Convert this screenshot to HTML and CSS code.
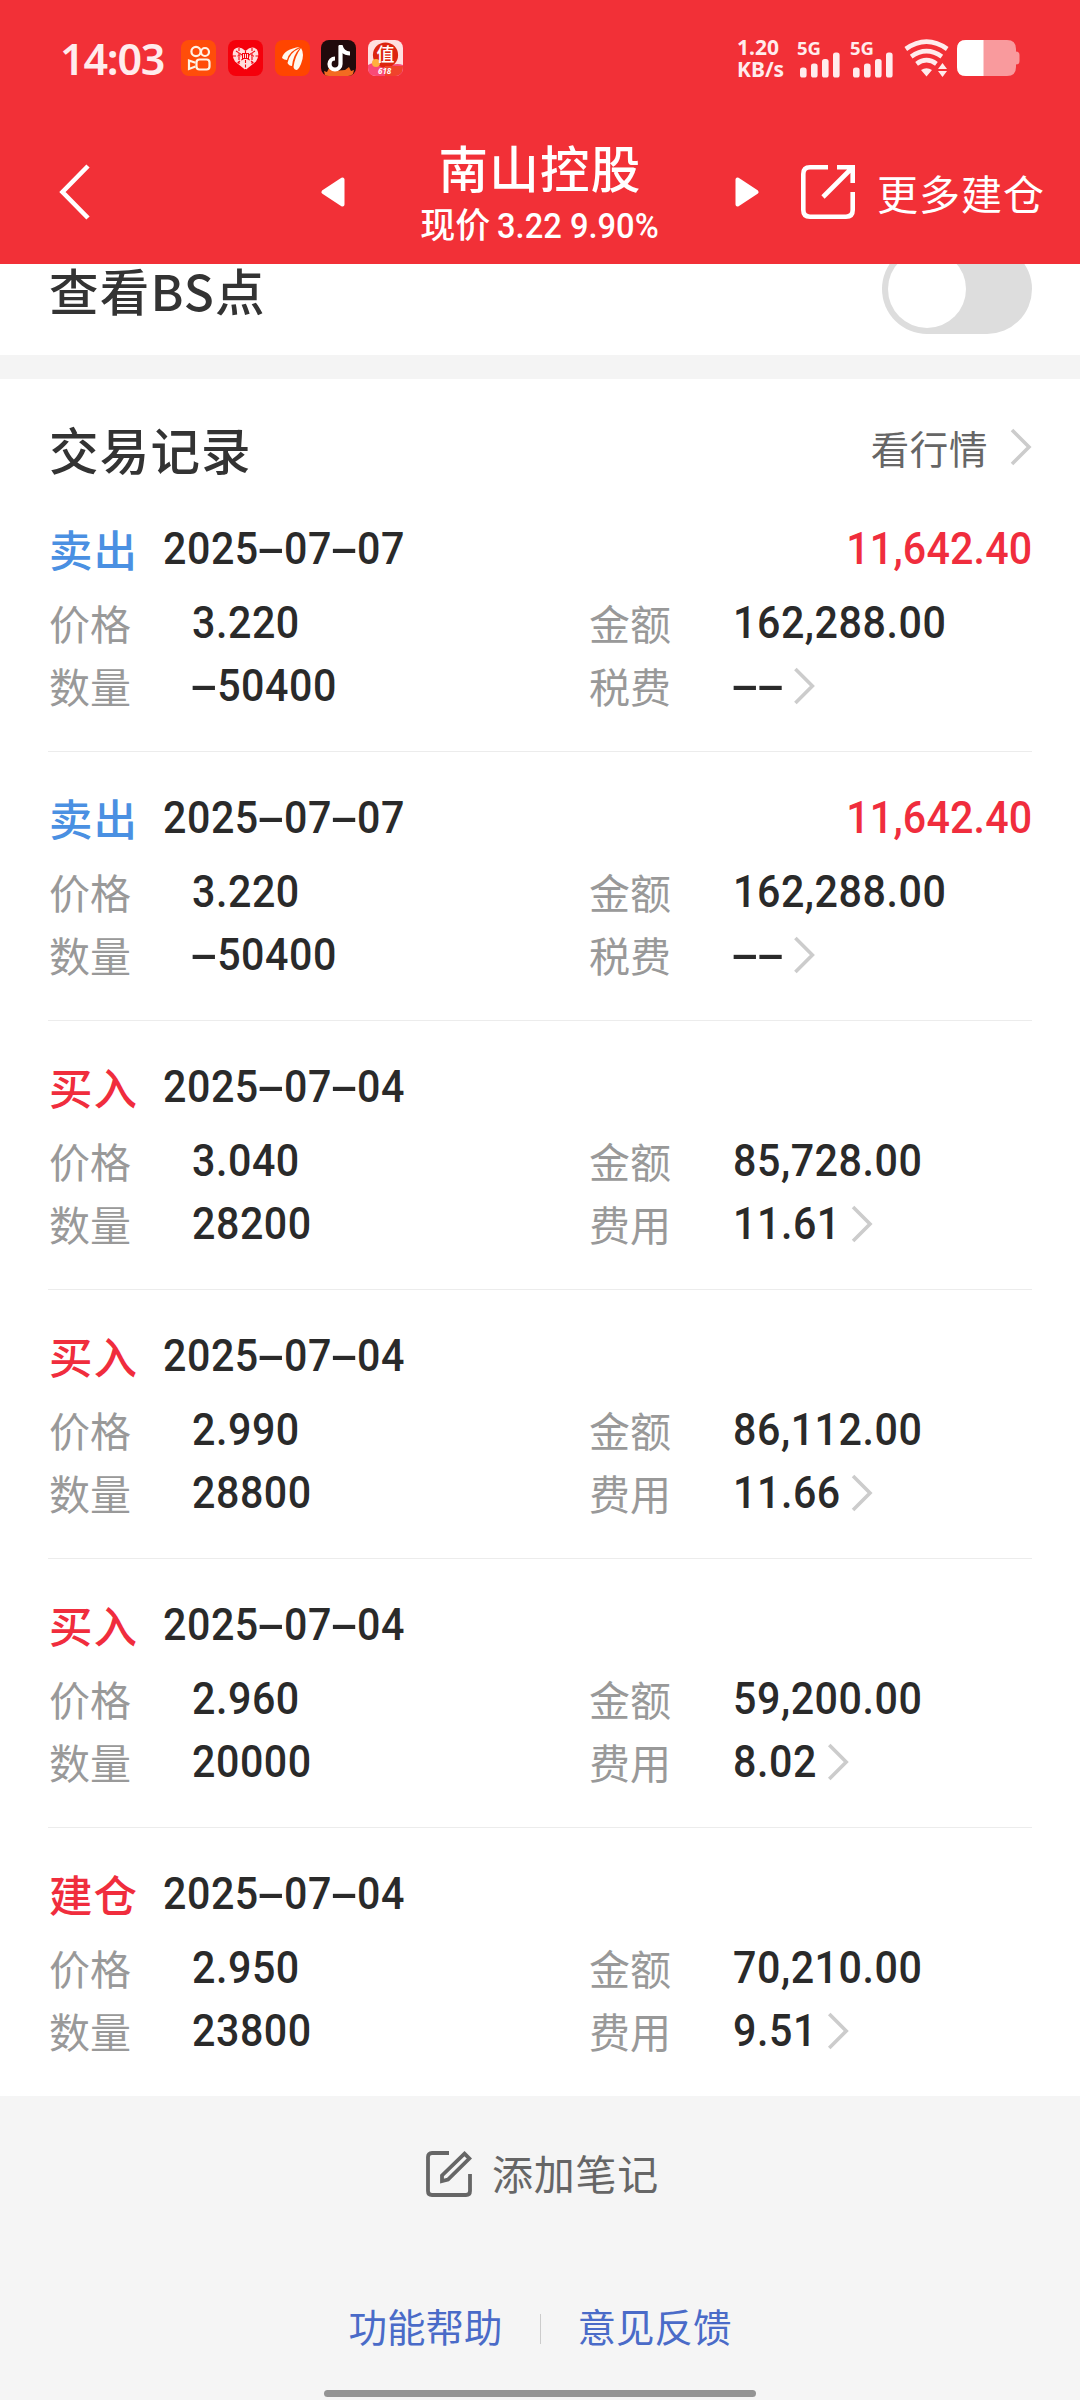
FILE: index.html
```html
<!DOCTYPE html>
<html lang="zh-CN">
<head>
  <meta charset="UTF-8">
  <title>南山控股 - 交易记录</title>
  <link rel="stylesheet" href="styles.css">
</head>
<body>

  <svg class="defs" width="0" height="0">
    <symbol id="chevron" viewBox="0 0 22 38" preserveAspectRatio="none"><path d="M2 2 L19 19 L2 36" fill="none" stroke="#ccc" stroke-width="3.6"/></symbol>
    <symbol id="signal" viewBox="0 0 40 26">
      <rect x="0" y="15.5" width="6.6" height="10" rx="2.6"/>
      <rect x="11" y="11.5" width="6.6" height="14" rx="2.6"/>
      <rect x="22" y="7" width="6.6" height="18.5" rx="2.6"/>
      <rect x="33" y="0.5" width="6.6" height="25" rx="2.6"/>
    </symbol>
  </svg>

  <header>
    <div class="status-bar">
      <span class="time">14:03</span>
      <div class="apps">
        <svg class="app" viewBox="0 0 35 36"><rect width="35" height="36" rx="8" fill="#ff4d0a"/>
          <g fill="none" stroke="#fff3e6" stroke-width="2.2"><circle cx="15" cy="11.5" r="4.6"/><circle cx="24" cy="12" r="4"/><rect x="15.5" y="19.5" width="13" height="10" rx="3"/><path d="M14.5 22.8 L8 20.5 V29 L14.5 26.5"/></g></svg>
        <svg class="app" viewBox="0 0 35 36"><rect width="35" height="36" rx="8" fill="#f5000b"/>
          <path d="M17.5 30 L7 21.5 Q3 15 6 9.5 Q11 5 17.5 11 Q24 5 29 9.5 Q32 15 28 21.5 Z" fill="#ffdcdc"/>
          <path d="M8 11 L26 23 M27 11 L9 23 M5 16 H30 M11 8 V24 M24 8 V24 M17.5 11 V30" stroke="#f5000b" stroke-width="1.1" stroke-dasharray="3 1.5" fill="none"/>
          <rect x="14" y="13" width="7" height="6" fill="#f5000b"/><path d="M15.5 14 V18 M17.5 14 V18 M19.5 14 V18" stroke="#ffdcdc"/></svg>
        <svg class="app" viewBox="0 0 35 36"><rect width="35" height="36" rx="8" fill="#ff4500"/>
          <g fill="#fff8ee"><path d="M7 18 Q9 9 25 7 Q14 11 12 20 Q9 20 7 18 Z"/><path d="M12.5 23 Q14 13 25 8 Q18 15 17 26 Q14 26 12.5 23 Z"/><path d="M18.5 27 Q20 16 26 8 Q30 14 26 24 Q24.5 28 22 30 Q19 30 18.5 27 Z"/></g></svg>
        <svg class="app" viewBox="0 0 35 36"><rect width="35" height="36" rx="8" fill="#210a0c"/>
          <path d="M4 35 L3 31 L6 32 L9 26 L12 31 L24 30 L28 27 L30 31 L33 30 L32 34 Q30 36 27 36 H8 Q5 36 4 35 Z" fill="#f36a21"/>
          <path d="M19.5 6 V24 A5.5 5.5 0 1 1 14 18.5" fill="none" stroke="#fff" stroke-width="4.2"/>
          <path d="M17.5 5 H21.5 Q23 11 29 11.5 V15.5 Q24 15.5 20.5 12.5 Z" fill="#fff"/></svg>
        <svg class="app" viewBox="0 0 35 36"><rect width="35" height="36" rx="8" fill="#ffdfe0"/>
          <path d="M0 25 Q8 20 17 28 Q27 22 35 25 V28 Q35 36 27 36 H8 Q0 36 0 28 Z" fill="#f94a76"/>
          <circle cx="17.5" cy="15" r="12.6" fill="#dd2410"/><circle cx="8" cy="23" r="4" fill="#ffb13d"/>
          <path d="M17 26 L35 26 L34 32 Q31 36 27 36 H17 Z" fill="#f0432c"/>
          <text class="zhi" x="8.5" y="21">值</text><text class="promo" x="10" y="34">618</text></svg>
      </div>
      <div class="status-icons">
        <div class="speed">1.20<br>KB/s</div>
        <div class="net"><span>5G</span><svg><use href="#signal"/></svg></div>
        <div class="net"><span>5G</span><svg><use href="#signal"/></svg></div>
        <svg class="wifi" viewBox="0 0 46 38">
          <g fill="none" stroke="#ffeced" stroke-width="4.6"><path d="M1.8 10 Q22.5 -4.6 43.2 10"/><path d="M7.2 17.6 Q22.5 6.8 37.8 17.6"/><path d="M12.6 24.8 Q22.5 17.6 32.4 24.8"/></g>
          <path d="M17 31 Q22.5 27.5 28 31 L22.5 37.5 Z M38.5 24 L43 30 H34 Z M34 32 H43 L38.5 38 Z" fill="#ffeced"/>
        </svg>
        <svg class="battery" viewBox="0 0 63 36">
          <path d="M9 0 H50 Q59 0 59 9 V11.5 Q62.5 11.5 62.5 15 V21 Q62.5 24.5 59 24.5 V27 Q59 36 50 36 H9 Q0 36 0 27 V9 Q0 0 9 0 Z" fill="#f99a9d"/>
          <path d="M26.5 0 H9 Q0 0 0 9 V27 Q0 36 9 36 H26.5 Z" fill="#fff"/>
        </svg>
      </div>
    </div>

    <nav class="nav">
      <svg class="back" viewBox="0 0 32 56"><path d="M29 2 L3.5 28 L29 54" fill="none" stroke="#fff" stroke-width="4.6"/></svg>
      <svg class="prev" viewBox="0 0 24 30"><path d="M2.5 15 L21.5 2.5 V27.5 Z"/></svg>
      <div class="stock">
        <h1>南山控股</h1>
        <p>现价 <span>3.22 9.90%</span></p>
      </div>
      <svg class="next" viewBox="0 0 24 30"><path d="M21.5 15 L2.5 2.5 V27.5 Z"/></svg>
      <div class="more">
        <svg viewBox="0 0 54 54"><path d="M27 2.3 H9 Q2.3 2.3 2.3 9 V45 Q2.3 51.7 9 51.7 H45 Q51.7 51.7 51.7 45 V27 M36 2.3 H51.7 V18 M51 3 L22 32" fill="none" stroke="#fff" stroke-width="4.6"/></svg>
        <span>更多建仓</span>
      </div>
    </nav>
  </header>

  <main>
    <section class="bs-row">
      <h2>查看BS点</h2>
      <div class="switch"><div class="knob"></div></div>
    </section>

    <section class="records">
      <div class="records-title">
        <h2>交易记录</h2>
        <a class="quote">看行情 <svg class="arrow"><use href="#chevron"/></svg></a>
      </div>

      <article class="record">
        <div class="record-head">
          <span class="type sell">卖出</span>
          <span class="date">2025<i>-</i>07<i>-</i>07</span>
          <span class="profit">11,642.40</span>
        </div>
        <dl>
          <dt>价格</dt><dd>3.220</dd>
          <dt>金额</dt><dd>162,288.00</dd>
          <dt>数量</dt><dd><i>-</i>50400</dd>
          <dt>税费</dt><dd><i>-</i><i>-</i><svg class="arrow"><use href="#chevron"/></svg></dd>
        </dl>
      </article>

      <article class="record">
        <div class="record-head">
          <span class="type sell">卖出</span>
          <span class="date">2025<i>-</i>07<i>-</i>07</span>
          <span class="profit">11,642.40</span>
        </div>
        <dl>
          <dt>价格</dt><dd>3.220</dd>
          <dt>金额</dt><dd>162,288.00</dd>
          <dt>数量</dt><dd><i>-</i>50400</dd>
          <dt>税费</dt><dd><i>-</i><i>-</i><svg class="arrow"><use href="#chevron"/></svg></dd>
        </dl>
      </article>

      <article class="record">
        <div class="record-head">
          <span class="type buy">买入</span>
          <span class="date">2025<i>-</i>07<i>-</i>04</span>
        </div>
        <dl>
          <dt>价格</dt><dd>3.040</dd>
          <dt>金额</dt><dd>85,728.00</dd>
          <dt>数量</dt><dd>28200</dd>
          <dt>费用</dt><dd>11.61<svg class="arrow"><use href="#chevron"/></svg></dd>
        </dl>
      </article>

      <article class="record">
        <div class="record-head">
          <span class="type buy">买入</span>
          <span class="date">2025<i>-</i>07<i>-</i>04</span>
        </div>
        <dl>
          <dt>价格</dt><dd>2.990</dd>
          <dt>金额</dt><dd>86,112.00</dd>
          <dt>数量</dt><dd>28800</dd>
          <dt>费用</dt><dd>11.66<svg class="arrow"><use href="#chevron"/></svg></dd>
        </dl>
      </article>

      <article class="record">
        <div class="record-head">
          <span class="type buy">买入</span>
          <span class="date">2025<i>-</i>07<i>-</i>04</span>
        </div>
        <dl>
          <dt>价格</dt><dd>2.960</dd>
          <dt>金额</dt><dd>59,200.00</dd>
          <dt>数量</dt><dd>20000</dd>
          <dt>费用</dt><dd>8.02<svg class="arrow"><use href="#chevron"/></svg></dd>
        </dl>
      </article>

      <article class="record">
        <div class="record-head">
          <span class="type buy">建仓</span>
          <span class="date">2025<i>-</i>07<i>-</i>04</span>
        </div>
        <dl>
          <dt>价格</dt><dd>2.950</dd>
          <dt>金额</dt><dd>70,210.00</dd>
          <dt>数量</dt><dd>23800</dd>
          <dt>费用</dt><dd>9.51<svg class="arrow"><use href="#chevron"/></svg></dd>
        </dl>
      </article>
    </section>
  </main>

  <footer>
    <div class="add-note">
      <svg viewBox="0 0 46 46"><g fill="none" stroke="#666" stroke-width="3.8"><path d="M23 2 H6 Q2 2 2 6 V40 Q2 44 6 44 H40 Q44 44 44 40 V23"/><path d="M38.5 2.7 L43.3 7.5 L22 28.5 L16 30 V24.5 Z"/></g></svg>
      <span>添加笔记</span>
    </div>
    <div class="links">
      <a>功能帮助</a>
      <a>意见反馈</a>
    </div>
    <div class="home-bar"></div>
  </footer>

</body>
</html>
```
FILE: styles.css
```css
* {
  margin: 0;
  padding: 0;
  box-sizing: border-box;
}

body {
  width: 1080px;
  height: 2400px;
  display: flex;
  flex-direction: column;
  overflow: hidden;
  background-color: #f5f5f5;
  color: #333;
  font-family: Roboto, "Noto Sans CJK SC", sans-serif;
}

h1, h2 {
  font-family: "Noto Sans CJK SC", sans-serif;
  font-size: 49.5px;
  font-weight: 500;
  line-height: 60px;
  letter-spacing: 1.2px;
}

svg { flex-shrink: 0; }
.defs { position: absolute; }
i { font-style: normal; }

/* Header */
header {
  position: relative;
  z-index: 1;
  height: 264px;
  background-color: #f23037;
  color: #fff;
}

.status-bar {
  height: 116px;
  padding: 0 60px;
  display: flex;
  align-items: center;
  color: #ffeced;
  font-family: "Noto Sans", sans-serif;
}

.time {
  width: 121px;
  font-size: 43px;
  font-weight: 600;
  letter-spacing: -1.2px;
}

.apps {
  display: flex;
  gap: 11.8px;
}

.app {
  width: 35px;
  height: 36px;
}

.zhi {
  font: 500 18px "Noto Sans CJK SC", sans-serif;
  fill: #fff;
}

.promo {
  font: italic 700 8px "Noto Sans", sans-serif;
  fill: #fff;
}

.status-icons {
  margin-left: auto;
  display: flex;
  align-items: center;
}

.speed {
  width: 61px;
  font-size: 21px;
  font-weight: 700;
  line-height: 22px;
}

.net {
  position: relative;
  width: 53px;
  height: 36px;
  padding-left: 2px;
}

.net span {
  position: absolute;
  left: -1px;
  top: -1px;
  font-size: 18.5px;
  font-weight: 700;
  line-height: 18px;
}

.net svg {
  display: block;
  width: 40px;
  height: 26px;
  margin-top: 11.5px;
  fill: #ffeced;
}

.wifi {
  width: 46px;
  height: 38px;
  margin-right: 7px;
}

.battery {
  width: 63px;
  height: 36px;
}

.nav {
  height: 148px;
  padding: 4px 35px 0 59px;
  display: flex;
  align-items: center;
}

.back {
  width: 32px;
  height: 56px;
}

.prev, .next {
  width: 24px;
  height: 30px;
  fill: #fff;
  stroke: #fff;
  stroke-width: 4;
  stroke-linejoin: round;
}

.prev { margin-left: 230px; }

.stock {
  width: 390px;
  padding-top: 4px;
  text-align: center;
}

.stock p {
  margin-top: 4px;
  font-size: 35px;
  font-weight: 500;
  line-height: 50px;
}

.stock span {
  display: inline-block;
  font-size: 35.5px;
  letter-spacing: 0;
  margin: 0 -6px 0 -9px;
  transform: scaleX(0.92);
}

.more {
  margin-left: auto;
  display: flex;
  align-items: center;
  gap: 22px;
  font-size: 41px;
  letter-spacing: 1px;
}

.more svg {
  width: 54px;
  height: 54px;
}

/* BS switch */
.bs-row {
  height: 115px;
  padding: 0 48px;
  display: flex;
  justify-content: space-between;
  background-color: #fff;
  border-bottom: 24px solid #f4f4f4;
}

.bs-row h2 { margin-top: -4px; }

.switch {
  width: 150px;
  height: 90px;
  margin-top: -20px;
  padding: 6px;
  border-radius: 45px;
  background-color: #ddd;
}

.knob {
  width: 78px;
  height: 78px;
  border-radius: 50%;
  background-color: #fff;
}

/* Records */
.records {
  padding: 0 48px;
  background-color: #fff;
}

.records h2, .bs-row h2 { padding-left: 1px; }

.records-title {
  height: 103px;
  padding-top: 40px;
  display: flex;
  justify-content: space-between;
}

.quote {
  display: flex;
  align-items: center;
  height: 56px;
  color: #666;
  font-size: 38.5px;
  letter-spacing: 0.6px;
}

.arrow {
  width: 22px;
  height: 38px;
}

.quote .arrow { margin-left: 22px; }

.record {
  height: 269px;
  padding-top: 34px;
}

.record + .record {
  padding-top: 33px;
  border-top: 1px solid #ececec;
}

.record-head {
  height: 64px;
  margin-bottom: 11px;
  display: flex;
  align-items: center;
}

.type {
  width: 115px;
  padding-left: 1px;
  font-size: 43.5px;
  font-weight: 500;
  letter-spacing: 1px;
}

.sell { color: #4a90e2; }
.buy { color: #f02d3d; }

/* slightly condensed figures */
.date, .profit, dd {
  font-size: 45px;
  font-weight: 500;
  letter-spacing: 0.6px;
  color: #2a2a2a;
  transform: scaleX(0.915);
  transform-origin: left;
}

/* hyphens are as wide as a digit */
.date i, dd i {
  display: inline-block;
  width: 27.5px;
  text-align: center;
  transform: scaleX(2.1);
}

.profit {
  margin-left: auto;
  letter-spacing: 0.2px;
  color: #f02d3d;
  transform-origin: right;
}

dl {
  display: grid;
  grid-template-columns: 144px 396px 145px 1fr;
  grid-auto-rows: 63px;
  align-items: center;
}

dt {
  margin-top: -1px;
  padding-left: 1px;
  color: #999;
  font-size: 41px;
}

dd {
  display: flex;
  align-items: center;
}

dd .arrow {
  width: 24px;
  margin-left: 11px;
}

/* Footer */
footer {
  display: flex;
  flex-direction: column;
  align-items: center;
}

.add-note {
  margin-top: 48px;
  padding-left: 5px;
  height: 60px;
  display: flex;
  align-items: center;
  gap: 20px;
  color: #666;
  font-size: 41px;
  letter-spacing: 0.8px;
}

.add-note span { margin-top: -4px; }

.add-note svg {
  width: 46px;
  height: 46px;
}

.links {
  margin-top: 95px;
  height: 60px;
  display: flex;
  align-items: center;
  color: #4a6bc8;
  font-size: 38.5px;
}

.links a {
  padding: 0 37px;
  line-height: 30px;
}

.links a + a { border-left: 1px solid #ccc; }

.home-bar {
  width: 432px;
  height: 7px;
  margin-top: 31px;
  border-radius: 4px;
  background-color: #949494;
}
```
